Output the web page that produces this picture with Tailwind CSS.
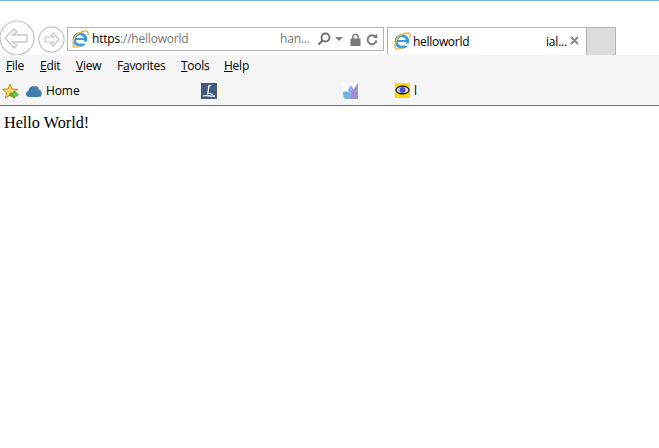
<!doctype html>
<html lang="en">

<head>
	<meta charset="utf-8">
	<title>helloworld</title>
	<script src="https://cdn.jsdelivr.net/npm/@tailwindcss/browser@4"></script>
</head>

<body class="w-[659px] h-[448px] overflow-hidden bg-white">
	<!-- browser chrome -->
	<div class="border-t border-[#79b4dc] font-['Open_Sans',sans-serif] text-black">

		<!-- nav row -->
		<div class="h-[54px] flex items-start overflow-hidden">
			<svg class="mt-[19px] shrink-0" width="36" height="36" viewBox="0 0 36 36" fill="none">
				<circle cx="17" cy="18" r="17" fill="#fff" stroke="#c4c4c4" stroke-width="1.2" />
				<path d="M5 18 L14 9 L17 12 L12 15 L27 15 L27 22 L12 22 L17 25 L14 28 Z" fill="#fff" stroke="#c8c8c8" stroke-width="1.4" stroke-linejoin="round" />
			</svg>
			<svg class="mt-[25px] ml-[2px] shrink-0" width="27" height="27" viewBox="0 0 27 27" fill="none">
				<circle cx="13.5" cy="13.5" r="12.6" fill="#fff" stroke="#c4c4c4" stroke-width="1.2" />
				<path d="M21 13.5 L15 7 L13 9 L16 11 L7 11 L7 16 L16 16 L13 18 L15 20 Z" fill="#fff" stroke="#c8c8c8" stroke-width="1.2" stroke-linejoin="round" />
			</svg>

			<!-- address bar -->
			<div class="mt-[26px] ml-[2px] w-[317px] h-[24px] border border-[#b4b4b4] flex items-center shrink-0">
				<svg class="ml-[3px] shrink-0" width="18" height="18" viewBox="0 0 18 18" fill="none">
					<circle cx="9" cy="9.5" r="5.8" stroke="#3a9ee0" stroke-width="3" />
					<path d="M4 9 H15" stroke="#2f8fd4" stroke-width="1.8" />
					<path d="M11.5 11.6 L17.5 11.6 L17.5 14 L11.5 14 Z" fill="#fff" />
					<path d="M2.5 13.5 C1.5 8 6 3 11.5 1.5 C14.5 0.7 18 0.6 17 5" stroke="#f2b53a" stroke-width="1.5" />
					<path d="M2.5 12.5 C0.5 18 5 17.8 8.5 16" stroke="#f2b53a" stroke-width="1.4" />
				</svg>
				<span class="ml-[3px] text-[12px] tracking-[-0.2px] text-[#777] w-[188px] shrink-0"><span class="text-black">https</span>://helloworld</span>
				<span class="text-[12px] tracking-[-0.2px] text-[#777] w-[37px] shrink-0">han...</span>
				<svg class="shrink-0" width="14" height="14" viewBox="0 0 14 14" fill="none">
					<circle cx="8.5" cy="5.5" r="4" stroke="#6e6e6e" stroke-width="1.8" />
					<path d="M5.5 8.5 L1.5 12.5" stroke="#6e6e6e" stroke-width="2.2" />
				</svg>
				<svg class="ml-[4px] shrink-0" width="8" height="4" viewBox="0 0 8 4"><path d="M0 0 H8 L4 4 Z" fill="#7a7a7a" /></svg>
				<svg class="ml-[7px] shrink-0" width="11" height="13" viewBox="0 0 11 13" fill="none">
					<rect x="0.5" y="5.5" width="10" height="7.5" fill="#7a7a7a" />
					<path d="M2.8 6 V3.8 C2.8 0.5 8.2 0.5 8.2 3.8 V6" stroke="#7a7a7a" stroke-width="1.4" />
				</svg>
				<svg class="ml-[5px] shrink-0" width="12" height="13" viewBox="0 0 12 13" fill="none">
					<path d="M9.8 4.2 A4.5 4.5 0 1 0 10.5 7.5" stroke="#7a7a7a" stroke-width="1.9" />
					<path d="M7 4.8 L11.5 5.2 L11 0.8 Z" fill="#7a7a7a" />
				</svg>
			</div>

			<!-- tabs -->
			<div class="mt-[26px] ml-[3px] w-[200px] h-[28px] border border-b-0 border-[#b4b4b4] bg-white flex items-center shrink-0">
				<svg class="ml-[5px] mb-[1px] shrink-0" width="18" height="18" viewBox="0 0 18 18" fill="none">
					<circle cx="9" cy="9.5" r="5.8" stroke="#3a9ee0" stroke-width="3" />
					<path d="M4 9 H15" stroke="#2f8fd4" stroke-width="1.8" />
					<path d="M11.5 11.6 L17.5 11.6 L17.5 14 L11.5 14 Z" fill="#fff" />
					<path d="M2.5 13.5 C1.5 8 6 3 11.5 1.5 C14.5 0.7 18 0.6 17 5" stroke="#f2b53a" stroke-width="1.5" />
					<path d="M2.5 12.5 C0.5 18 5 17.8 8.5 16" stroke="#f2b53a" stroke-width="1.4" />
				</svg>
				<span class="ml-[2px] text-[12px] tracking-[-0.3px] w-[133px] shrink-0">helloworld</span>
				<span class="text-[12px] tracking-[-0.2px] w-[23px] shrink-0">ial...</span>
				<svg class="ml-[1px] mb-[3px] shrink-0" width="9" height="9" viewBox="0 0 9 9"><path d="M1 1 L8 8 M8 1 L1 8" stroke="#8a8a8a" stroke-width="2" /></svg>
			</div>
			<div class="mt-[26px] w-[29px] h-[28px] border border-l-0 border-b-0 border-[#b4b4b4] bg-[#dcdcdc] shrink-0"></div>
		</div>

		<!-- menu + favorites -->
		<div class="h-[50px] bg-[#f5f5f5] border-b border-[#6e6e6e] box-content -mb-px">
			<div class="h-[22px] flex items-center pl-[6px] text-[12px] tracking-[-0.25px]">
				<span class="w-[34px]"><u>F</u>ile</span>
				<span class="w-[36px]"><u>E</u>dit</span>
				<span class="w-[41px]"><u>V</u>iew</span>
				<span class="w-[64px]">F<u>a</u>vorites</span>
				<span class="w-[43px]"><u>T</u>ools</span>
				<span><u>H</u>elp</span>
			</div>
			<div class="h-[25px] mt-[2px] flex items-center text-[12px]">
				<svg class="ml-[2px] shrink-0" width="17" height="17" viewBox="0 0 17 17" fill="none">
					<path d="M8 1 L10 6 L15.5 6.3 L11.3 9.8 L12.6 15 L8 12.2 L3.4 15 L4.7 9.8 L0.5 6.3 L6 6 Z" fill="#f8d66a" stroke="#c08a1e" stroke-width="1" stroke-linejoin="round" />
					<path d="M8 10 H12 V8 L16.5 11.5 L12 15 V13 H8 Z" fill="#6cc644" stroke="#3f8f2a" stroke-width="0.7" />
				</svg>
				<svg class="ml-[7px] mb-[2px] shrink-0" width="16" height="12" viewBox="0 0 16 12"><path d="M3.5 12 C-1 12 -1 6.5 2.5 6 C2.5 2.5 6 0.5 8.5 1.5 C10.5 0 13 2 12.5 4.5 C16.5 4.5 17 12 12.5 12 Z" fill="#417cb0" /></svg>
				<span class="ml-[4px] mb-[1px] w-[155px] tracking-[-0.1px] shrink-0">Home</span>
				<svg class="mb-[2px] shrink-0" width="16" height="16" viewBox="0 0 16 16" fill="none">
					<rect width="16" height="16" fill="#3f5a7e" />
					<path d="M10 3 C8.5 1.5 6.5 3 8 5 M8 3 L6.5 11.5 M2 13 C6 11.5 9 14 14 13 M7 10 L12 11.5" stroke="#fff" stroke-width="1.3" />
				</svg>
				<span class="ml-[3px] mb-[2px] w-[1px] h-[8px] bg-[#fdf8c4] shrink-0"></span>
				<svg class="ml-[121px] mb-[2px] shrink-0" width="16" height="16" viewBox="0 0 16 16" fill="none">
					<rect width="16" height="16" fill="#fff" />
					<path d="M1 9 C5 8 8 9 9 10 L8 16 L3 16 C1 15 1 12 1 9 Z" fill="#6fb8dc" />
					<path d="M6 7 C7 5 8 3 9 2 L12 7 L9 12 Z" fill="#8fb0e4" />
					<path d="M11 7 C13 5 14 2 16 0 L16 16 L8 16 C8 12 9 10 11 7 Z" fill="#a18fd6" />
				</svg>
				<svg class="ml-[37px] mb-[2px] shrink-0" width="15" height="15" viewBox="0 0 15 15" fill="none">
					<rect width="15" height="15" fill="#ffd800" />
					<ellipse cx="7.5" cy="7" rx="6.5" ry="3.8" fill="#ddd" stroke="#111" stroke-width="1.2" />
					<circle cx="7.5" cy="7" r="3" fill="#4a4fd0" />
				</svg>
				<span class="ml-[4px] mb-[1px] shrink-0">l</span>
			</div>
		</div>
	</div>

	<!-- page -->
	<p class="pt-[9px] pl-[4px] font-['Liberation_Serif',serif] text-[16.2px] text-black leading-[18px]">Hello World!</p>
</body>

</html>
